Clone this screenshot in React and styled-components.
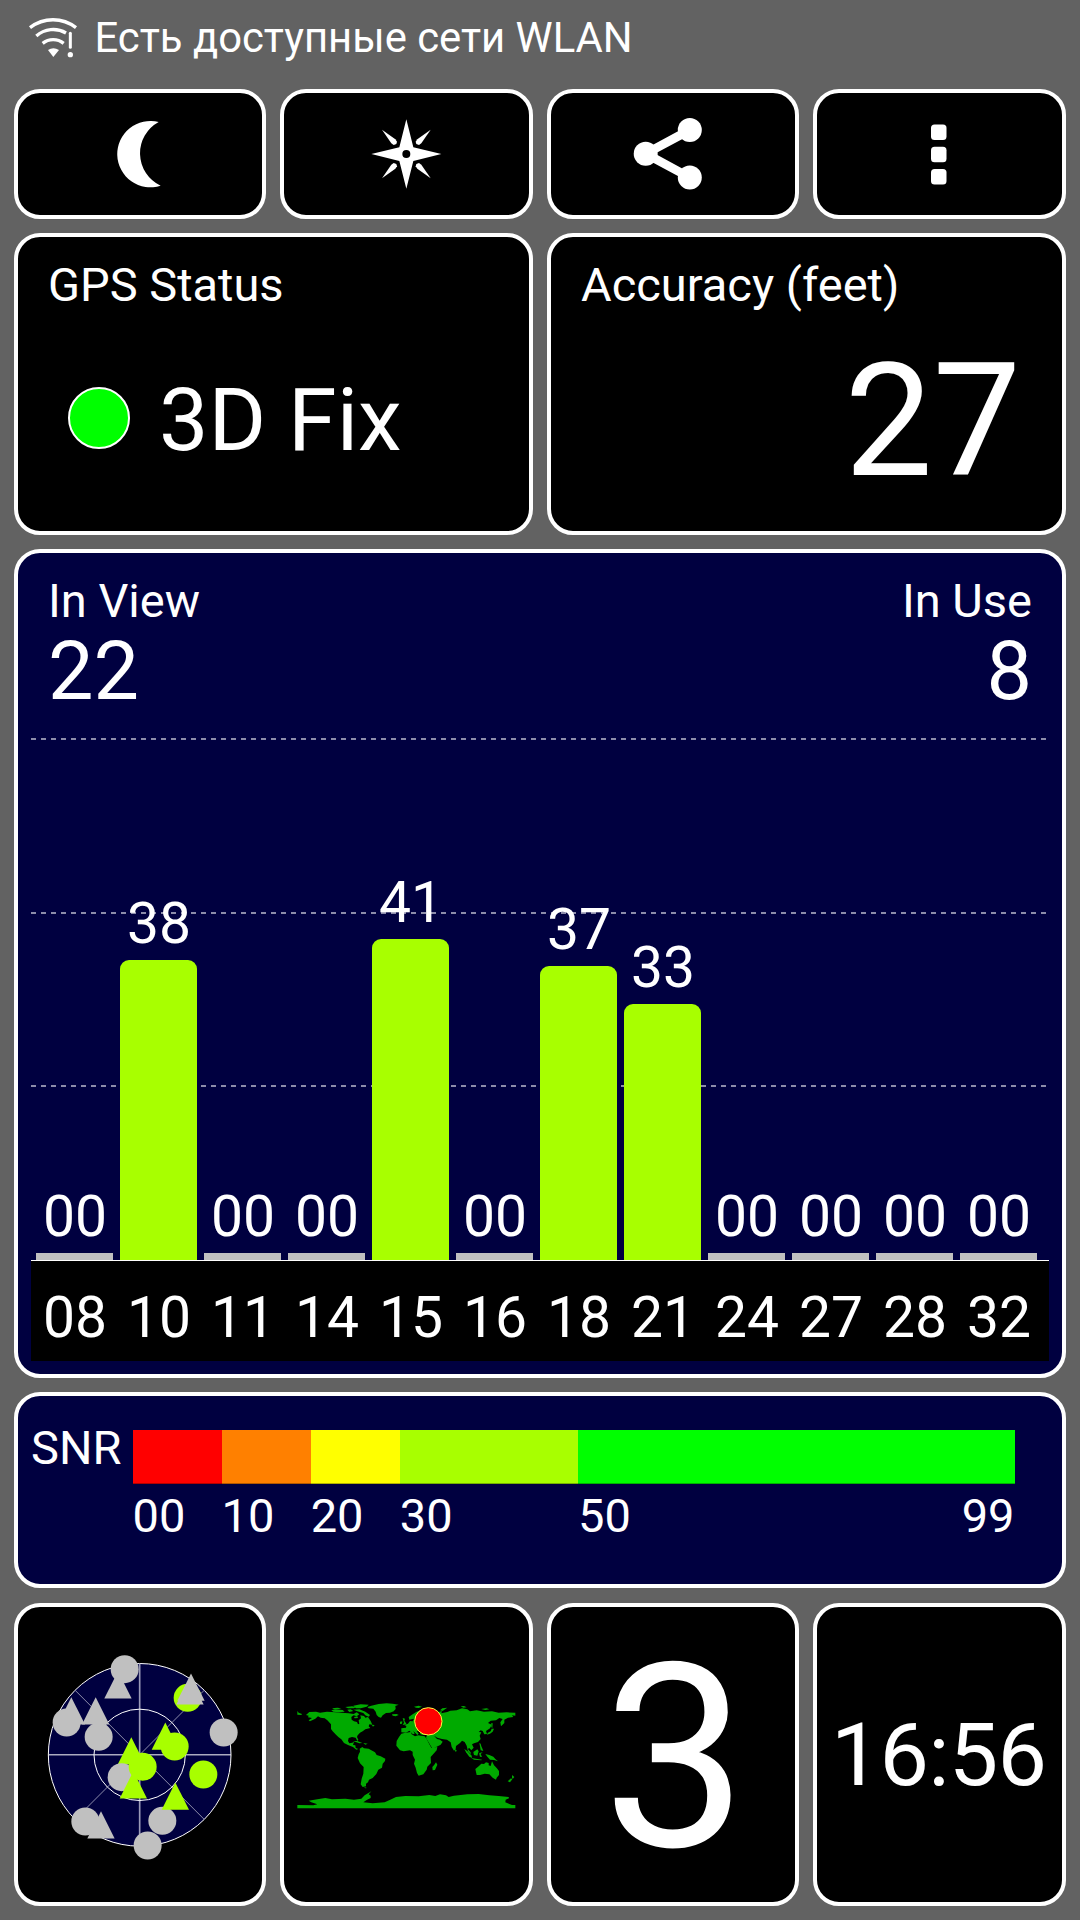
import React from "react";
import styled, { createGlobalStyle } from "styled-components";

const GlobalStyle = createGlobalStyle`
  * {
    box-sizing: border-box;
  }
  body {
    margin: 0;
    background-color: #626262;
    color: #fff;
    font-family: Roboto, "Noto Sans", sans-serif;
  }
`;

const Screen = styled.div`
  width: 1080px;
  height: 1920px;
  display: flex;
  flex-direction: column;
`;

const StatusBar = styled.div`
  height: 89px;
  flex: none;
  display: flex;
  align-items: flex-start;
  padding: 8px 0 0 20px;
`;

const StatusText = styled.span`
  padding: 9px 0 0 14.5px;
  font-size: 41.8px;
  line-height: 42px;
  white-space: nowrap;
`;

const Grid = styled.div`
  flex: none;
  display: grid;
  grid-template-columns: 252px 253px 252px 253px;
  grid-template-rows: 130px 302px 829px 197px 303px;
  gap: 14px;
  padding: 0 14px;
`;

const Panel = styled.div`
  grid-column: span ${(props) => props.$span || 1};
  min-width: 0;
  display: flex;
  flex-direction: column;
  border: 4px solid #fff;
  border-radius: 26px;
  background-color: ${(props) => (props.$navy ? "#000040" : "#000")};
`;

const CenterPanel = styled(Panel)`
  align-items: center;
  justify-content: center;
`;

const InfoPanel = styled(Panel)`
  padding: 24px 30px 0;
`;

const ChartPanel = styled(Panel)`
  padding: 24px 13px 13px;
`;

const ScalePanel = styled(Panel)`
  flex-direction: row;
  align-items: flex-start;
  margin-bottom: 1px;
  padding-left: 13px;
`;

const Label = styled.span`
  font-size: 47px;
  line-height: 47px;
  white-space: nowrap;
`;

const FixRow = styled.div`
  display: flex;
  align-items: center;
  gap: 29px;
  padding: 68px 0 0 20px;
`;

const FixDot = styled.span`
  width: 62px;
  height: 62px;
  margin-bottom: 4px;
  border: 2px solid #fff;
  border-radius: 50%;
  background-color: #00ff00;
`;

const Value = styled.span`
  font-size: ${(props) => props.$size}px;
  line-height: ${(props) => props.$size}px;
  white-space: nowrap;
`;

const AccuracyValue = styled(Value)`
  align-self: flex-end;
  margin: 35px 11px 0 0;
`;

const ChartHeader = styled.div`
  display: flex;
  justify-content: space-between;
  padding: 0 17px;
`;

const Counter = styled.div`
  display: flex;
  flex-direction: column;
  gap: 7px;
  align-items: ${(props) => (props.$right ? "flex-end" : "flex-start")};
`;

const dash = `repeating-linear-gradient(
  90deg, #8c8caa 0 5px, transparent 5px 10px
)`;

const Plot = styled.div`
  flex: 1;
  display: flex;
  align-items: flex-end;
  gap: 7px;
  padding-left: 5px;
  border-bottom: 1px solid #fff;
  background-image: ${dash}, ${dash}, ${dash};
  background-size: 100% 2px;
  background-position: 0 26px, 0 200px, 0 373px;
  background-repeat: no-repeat;
`;

const BarColumn = styled.div`
  width: 77px;
  display: flex;
  flex-direction: column;
  gap: 8px;
`;

const CellValue = styled(Value)`
  width: 77px;
  padding-left: 1px;
  text-align: center;
`;

const Bar = styled.div`
  width: 100%;
  border-radius: ${(props) => (props.$active ? "9px 9px 0 0" : "0")};
  background-color: ${(props) => (props.$active ? "#a8ff00" : "#c0c0c0")};
`;

const Ids = styled.div`
  height: 100px;
  display: flex;
  gap: 7px;
  padding: 28px 0 0 5px;
  background-color: #000;
`;

const ScaleLabel = styled(Label)`
  width: 101.5px;
  flex: none;
  padding-top: 28px;
`;

const Scale = styled.div`
  width: 882px;
  display: flex;
  padding-top: 34px;
`;

const Segment = styled.div`
  flex: ${(props) => props.$weight} 0 0;
  min-width: 0;
`;

const Swatch = styled.div`
  height: 54px;
  margin-bottom: 8px;
  background-color: ${(props) => props.$color};
  box-shadow: inset 0 -1px rgba(0, 0, 0, 0.3);
`;

const SegmentLabels = styled.div`
  display: flex;
  justify-content: space-between;
`;

const LockCount = styled(Value)`
  padding: 7px 0 0 4px;
`;

const Clock = styled(Value)`
  padding: 1px 2px 0 0;
  letter-spacing: -0.8px;
`;

const satellites = [
  { id: "08", snr: "00", height: 7 },
  { id: "10", snr: "38", height: 300 },
  { id: "11", snr: "00", height: 7 },
  { id: "14", snr: "00", height: 7 },
  { id: "15", snr: "41", height: 321 },
  { id: "16", snr: "00", height: 7 },
  { id: "18", snr: "37", height: 294 },
  { id: "21", snr: "33", height: 256 },
  { id: "24", snr: "00", height: 7 },
  { id: "27", snr: "00", height: 7 },
  { id: "28", snr: "00", height: 7 },
  { id: "32", snr: "00", height: 7 },
];

const segments = [
  { color: "#ff0000", weight: 10, labels: ["00"] },
  { color: "#ff8000", weight: 10, labels: ["10"] },
  { color: "#ffff00", weight: 10, labels: ["20"] },
  { color: "#a8ff00", weight: 20, labels: ["30"] },
  { color: "#00ff00", weight: 49, labels: ["50", "99"] },
];

const GREY = "#c0c0c0";
const LIME = "#a8ff00";

// drawn in this order, x/y is the centre of a circle or the tip of a triangle
const skyMarks = [
  ["tri", 295, 92, GREY],
  ["dot", 315, 86, GREY],
  ["tri", 155, 170, GREY],
  ["dot", 141, 246, GREY],
  ["dot", 237, 289, GREY],
  ["tri", 228, 170, GREY],
  ["dot", 504, 172, LIME],
  ["tri", 514, 99, GREY],
  ["tri", 511, 110, GREY],
  ["dot", 612, 276, GREY],
  ["tri", 437, 246, LIME],
  ["dot", 465, 318, LIME],
  ["tri", 335, 290, LIME],
  ["dot", 306, 410, GREY],
  ["dot", 369, 379, LIME],
  ["tri", 341, 392, LIME],
  ["dot", 551, 402, LIME],
  ["dot", 428, 541, GREY],
  ["tri", 467, 426, LIME],
  ["dot", 197, 543, GREY],
  ["tri", 244, 512, GREY],
  ["dot", 384, 615, GREY],
];

const WifiIcon = () => (
  <svg width="60" height="60" viewBox="0 0 180 180" fill="none">
    <g stroke="#fff" strokeWidth="10">
      <path d="M30 59A112 112 0 0 1 168 59" />
      <path d="M49 84A76 76 0 0 1 138 75" />
      <path d="M68 106A50 50 0 0 1 131 106" />
    </g>
    <path d="M84 126Q100 116 117 126L100 147Z" fill="#fff" />
    <path d="M151 76V118" stroke="#fff" strokeWidth="9" strokeLinecap="round" />
    <circle cx="151" cy="140" r="8" fill="#fff" />
  </svg>
);

const MoonIcon = () => (
  <svg width="72" height="72" viewBox="11 54 216 216">
    <path
      d="M175 66A99.500 99.500 0 1 0 181 257A107 107 0 0 1 175 66Z"
      fill="#fff"
    />
  </svg>
);

const CompassIcon = () => (
  <svg width="72" height="72" viewBox="812 54 216 216" fill="#fff">
    <path d="M918 58L939 142L1023 162L939 183L918 266L897 183L813 162L897 142Z" />
    <path d="M845 89L885 118L890 125L888 132L880 135L873 130Z" />
    <path d="M991 89L951 118L946 125L948 132L956 135L963 130Z" />
    <path d="M845 235L885 206L890 199L888 192L880 189L873 194Z" />
    <path d="M991 235L951 206L946 199L948 192L956 189L963 194Z" />
    <circle cx="918" cy="162" r="12" fill="#000" />
  </svg>
);

const ShareIcon = () => (
  <svg width="80" height="80" viewBox="633 114 80 80" fill="#fff">
    <path
      d="M689.800 130L645.700 153.700L689.800 177.500"
      stroke="#fff"
      strokeWidth="8.800"
      fill="none"
    />
    <circle cx="645.700" cy="153.700" r="12" />
    <circle cx="689.800" cy="130" r="12" />
    <circle cx="689.800" cy="177.500" r="12" />
  </svg>
);

const MoreIcon = () => (
  <svg width="17" height="62" viewBox="0.500 -1 17 62" fill="#fff">
    <rect x="0.500" y="0.500" width="15.500" height="15.500" rx="3.500" />
    <rect x="0.500" y="22.800" width="15.500" height="15.500" rx="3.500" />
    <rect x="0.500" y="45" width="15.500" height="15.500" rx="3.500" />
  </svg>
);

const SkyView = () => (
  <svg width="200" height="220" viewBox="61 13.500 600 660">
    <circle
      cx="360"
      cy="343"
      r="274"
      fill="#000040"
      stroke="#fff"
      strokeWidth="3"
    />
    <path
      d="M166 149L554 537M554 149L166 537"
      stroke="#8c8caa"
      strokeWidth="3"
    />
    <path d="M360 69V617" stroke="#9a9ab8" strokeWidth="5" />
    <path d="M86 343H634" stroke="#fff" strokeWidth="3" />
    <circle
      cx="360"
      cy="343"
      r="137"
      fill="none"
      stroke="#fff"
      strokeWidth="3"
    />
    {skyMarks.map(([kind, x, y, color]) =>
      kind === "dot" ? (
        <circle key={`${x}-${y}`} cx={x} cy={y} r="42" fill={color} />
      ) : (
        <path key={`${x}-${y}`} d={`M${x} ${y}l41 82h-82z`} fill={color} />
      )
    )}
  </svg>
);

const WorldMap = () => (
  <svg width="222" height="110" viewBox="32 59 666 330">
    <g fill="#00aa00">
      {/* north america */}
      <path d="M36 92L40 97L50 101L48 104L36 103Z" />
      <path d="M62 104L72 95L92 94L104 97L125 94L150 96L168 97L190 99L205 101L214 96L222 102L214 108L205 105L198 110L199 118L206 123L215 125L218 132L222 130L220 120L227 114L225 105L236 107L240 112L248 110L256 122L261 133L252 132L250 138L255 143L240 147L232 153L224 157L217 165L215 170L219 178L216 182L211 172L200 170L190 173L188 182L192 189L201 187L206 184L203 194L210 195L211 203L219 206L213 208L203 200L188 194L176 188L168 177L159 170L152 163L142 153L137 146L137 132L126 120L118 114L106 112L98 108L90 115L74 123L70 120L80 113L68 111L70 106Z" />
      <path d="M138 90L150 87L172 89L178 94L160 96L144 94Z" />
      <path d="M140 84L156 82L168 84L160 86L146 87Z" />
      <path d="M180 80L200 78L214 80L205 84L188 84Z" />
      <path d="M186 88L196 87L204 92L192 95Z" />
      <path d="M204 88L222 87L240 94L254 104L250 109L240 105L234 98L216 93Z" />
      <path d="M204 76L226 72L250 73L244 79L226 84L212 84Z" />
      <path d="M206 110L216 108L218 113L208 114Z" />
      <path d="M259 133L268 134L263 139Z" />
      <path d="M203 182L216 182L231 188L222 189Z" />
      <path d="M234 188L247 190L240 193Z" />
      {/* greenland and iceland */}
      <path d="M246 80L258 76L280 71L304 69L322 70L340 73L330 77L331 86L325 93L314 97L302 98L292 105L287 112L280 110L274 104L271 94L264 85L250 84Z" />
      <path d="M320 102L334 101L340 104L331 108L322 106Z" />
      {/* south america */}
      <path d="M223 205L231 200L236 204L250 205L258 210L269 216L274 224L286 228L300 235L299 242L292 250L290 262L279 268L273 281L262 293L251 298L248 306L242 310L242 318L232 320L226 312L229 295L234 280L235 260L224 249L217 233L220 222L224 214Z" />
      <path d="M236 320L245 323L240 324Z" />
      {/* africa */}
      <path d="M348 160L357 158L377 155L379 162L389 168L399 165L418 168L424 176L430 188L438 202L456 200L454 210L436 230L437 248L426 259L424 268L414 282L400 286L395 278L391 262L386 250L389 238L382 224L382 214L374 210L355 213L344 210L333 196L334 182L341 170Z" />
      <path d="M452 246L456 253L449 269L442 270L441 260L447 253Z" />
      {/* europe and asia */}
      <path d="M348 156L348 144L362 142L363 137L357 134L368 130L374 122L382 123L386 115L372 118L370 110L382 102L394 94L410 89L424 91L440 95L458 96L470 92L468 99L486 95L495 91L514 90L530 84L546 87L554 93L574 90L596 94L620 93L640 97L664 96L690 97L690 106L680 105L684 110L668 112L657 118L657 128L647 138L645 126L652 116L642 113L632 120L616 121L608 128L619 133L614 144L602 152L605 161L597 162L592 152L586 150L580 155L588 156L583 166L586 176L578 185L566 189L560 192L565 202L558 210L551 202L548 207L556 216L556 222L548 213L544 196L538 185L530 181L524 188L512 197L511 207L506 211L499 200L496 186L485 178L470 176L456 172L446 166L455 176L464 178L472 184L466 193L442 205L436 196L422 173L425 164L411 164L404 160L405 153L394 152L400 160L396 164L384 152L388 160L383 162L372 151L362 157Z" />
      <path d="M352 113L359 115L357 121L364 132L352 134L356 127Z" />
      <path d="M344 124L351 123L350 130L344 131Z" />
      <path d="M386 79L400 76L410 79L400 83L392 82Z" />
      <path d="M464 90L471 84L486 82L480 86L472 92Z" />
      <path d="M526 78L536 77L544 81L534 82Z" />
      <path d="M588 86L604 84L612 87L600 89Z" />
      <path d="M618 128L622 129L621 143L618 140Z" />
      <path d="M619 145L626 145L622 154L614 160L604 163L608 157L616 153Z" />
      <path d="M510 207L514 210L512 215L509 212Z" />
      {/* indonesia and the philippines */}
      <path d="M537 206L546 212L559 226L560 233L552 229L542 216Z" />
      <path d="M558 233L576 236L590 238L588 240L566 238Z" />
      <path d="M564 215L576 207L580 213L576 226L566 224Z" />
      <path d="M582 218L592 216L586 221L590 230L584 229L582 222Z" />
      <path d="M582 188L586 190L588 198L592 207L594 212L586 210L584 198Z" />
      <path d="M600 221L612 224L624 229L630 236L638 243L626 239L614 238L606 229Z" />
      {/* australia and new zealand */}
      <path d="M570 266L580 258L588 250L596 251L602 246L610 248L610 255L616 257L620 243L626 255L634 263L641 272L641 284L634 292L632 298L622 292L612 282L598 280L584 284L574 284Z" />
      <path d="M680 284L687 290L682 296L680 291Z" />
      <path d="M677 294L681 297L674 306L667 303Z" />
      {/* antarctica */}
      <path d="M36 374L84 375L96 372L78 366L70 361L96 357L120 353L140 357L180 355L206 358L228 355L238 345L258 333L250 342L256 346L256 353L244 359L234 366L262 369L298 366L318 357L332 350L360 347L400 348L432 344L450 347L464 342L482 345L490 350L506 346L546 342L580 341L612 345L640 347L670 350L671 354L661 358L660 366L680 374L690 374V384H36Z" />
    </g>
    <circle
      cx="429"
      cy="123"
      r="41"
      fill="#ff0000"
      stroke="#ffff40"
      strokeWidth="3"
    />
  </svg>
);

const SignalChart = () => (
  <ChartPanel $span={4} $navy>
    <ChartHeader>
      <Counter>
        <Label>In View</Label>
        <Value $size={81}>22</Value>
      </Counter>
      <Counter $right>
        <Label>In Use</Label>
        <Value $size={81}>8</Value>
      </Counter>
    </ChartHeader>
    <Plot>
      {satellites.map((sat) => (
        <BarColumn key={sat.id}>
          <CellValue $size={57}>{sat.snr}</CellValue>
          <Bar $active={sat.snr !== "00"} style={{ height: sat.height }} />
        </BarColumn>
      ))}
    </Plot>
    <Ids>
      {satellites.map((sat) => (
        <CellValue key={sat.id} $size={57}>
          {sat.id}
        </CellValue>
      ))}
    </Ids>
  </ChartPanel>
);

const SnrScale = () => (
  <ScalePanel $span={4} $navy>
    <ScaleLabel>SNR</ScaleLabel>
    <Scale>
      {segments.map((segment) => (
        <Segment key={segment.color} $weight={segment.weight}>
          <Swatch $color={segment.color} />
          <SegmentLabels>
            {segment.labels.map((label) => (
              <Label key={label}>{label}</Label>
            ))}
          </SegmentLabels>
        </Segment>
      ))}
    </Scale>
  </ScalePanel>
);

const App = () => {
  return (
    <>
      <GlobalStyle />
      <Screen>
        <StatusBar>
          <WifiIcon />
          <StatusText>Есть доступные сети WLAN</StatusText>
        </StatusBar>
        <Grid>
          <CenterPanel>
            <MoonIcon />
          </CenterPanel>
          <CenterPanel>
            <CompassIcon />
          </CenterPanel>
          <CenterPanel>
            <ShareIcon />
          </CenterPanel>
          <CenterPanel>
            <MoreIcon />
          </CenterPanel>
          <InfoPanel $span={2}>
            <Label>GPS Status</Label>
            <FixRow>
              <FixDot />
              <Value $size={88}>3D Fix</Value>
            </FixRow>
          </InfoPanel>
          <InfoPanel $span={2}>
            <Label>Accuracy (feet)</Label>
            <AccuracyValue $size={157}>27</AccuracyValue>
          </InfoPanel>
          <SignalChart />
          <SnrScale />
          <CenterPanel>
            <SkyView />
          </CenterPanel>
          <CenterPanel>
            <WorldMap />
          </CenterPanel>
          <CenterPanel>
            <LockCount $size={257}>3</LockCount>
          </CenterPanel>
          <CenterPanel>
            <Clock $size={88}>16:56</Clock>
          </CenterPanel>
        </Grid>
      </Screen>
    </>
  );
};

export default App;
